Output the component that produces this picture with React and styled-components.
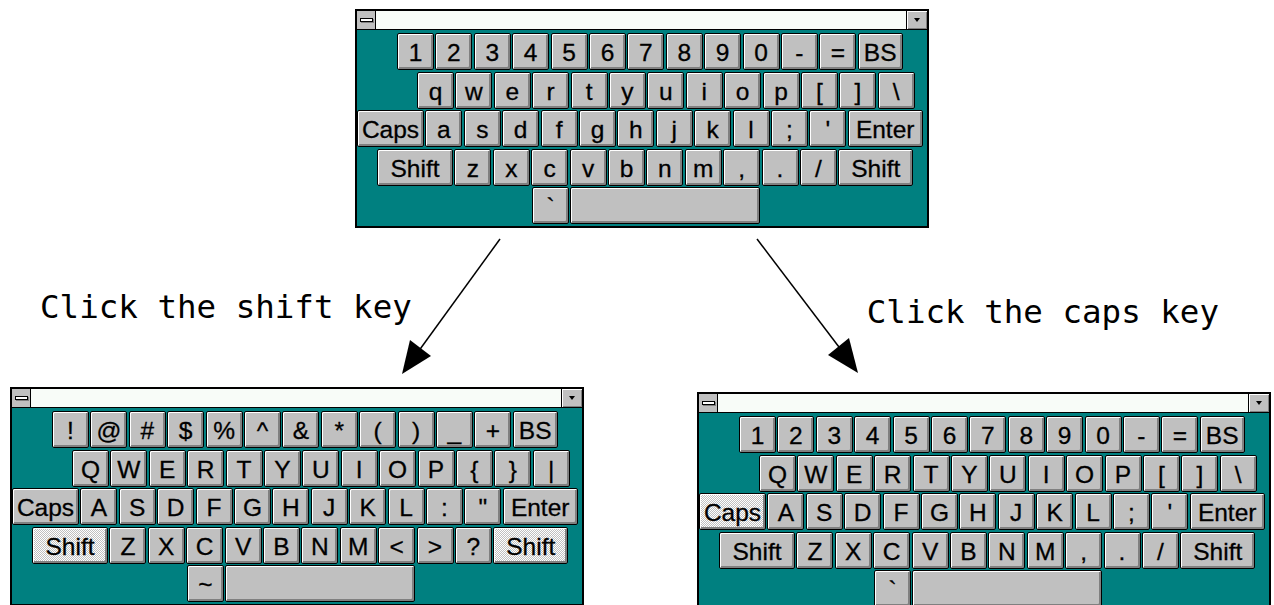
import React from "react";
import styled, { createGlobalStyle } from "styled-components";

const GlobalStyle = createGlobalStyle`
  html, body { margin: 0; padding: 0; background: #ffffff; }
  #root { width: 1274px; height: 605px; }
`;

const Page = styled.div`
  position: relative;
  width: 1274px;
  height: 605px;
  overflow: hidden;
  background: #ffffff;
  display: flex;
  flex-direction: column;
`;

const TopRow = styled.div`
  display: flex;
  padding: 9px 0 0 355px;
  flex: none;
`;

const MiddleRow = styled.div`
  display: flex;
  align-items: flex-start;
  height: 159px;
  flex: none;
`;

const Caption = styled.div`
  margin-left: ${(p) => p.$x}px;
  margin-top: ${(p) => p.$y}px;
  font-family: "DejaVu Sans Mono", "Liberation Mono", monospace;
  font-size: 32.5px;
  line-height: 36px;
  color: #000;
  white-space: nowrap;
  flex: none;
`;

const BottomRow = styled.div`
  display: flex;
  align-items: flex-start;
  padding-left: 10px;
  gap: 113px;
  flex: none;
`;

const WindowSlot = styled.div`
  margin-top: ${(p) => p.$y || 0}px;
  flex: none;
`;

const Window = styled.div`
  box-sizing: border-box;
  width: 574px;
  height: 219px;
  border: 2px solid #000;
  background: #008080;
  display: flex;
  flex-direction: column;
`;

const TitleBar = styled.div`
  box-sizing: border-box;
  height: 19px;
  display: flex;
  border-bottom: 1px solid #000;
  flex: none;
`;

const SysBox = styled.div`
  box-sizing: border-box;
  width: 19px;
  background: #c0c0c0;
  border-right: 1px solid #000;
  display: flex;
  align-items: center;
  justify-content: center;
`;

const SysBar = styled.div`
  box-sizing: border-box;
  width: 13px;
  height: 4px;
  background: #fff;
  border: 1px solid #000;
  box-shadow: 1px 1px 0 #808080;
`;

const Field = styled.div`
  flex: 1;
  background: #f8fcf8;
`;

const DropButton = styled.div`
  box-sizing: border-box;
  width: 21px;
  background: #c0c0c0;
  border-left: 1px solid #000;
  box-shadow: inset 1px 1px 0 #fff, inset -1px -1px 0 #808080;
  display: flex;
  align-items: center;
  justify-content: center;
`;

const DropArrow = styled.div`
  width: 0;
  height: 0;
  border-left: 3px solid transparent;
  border-right: 3px solid transparent;
  border-top: 4px solid #000;
`;

const KeyArea = styled.div`
  display: flex;
  flex-direction: column;
  gap: 1.5px;
  padding-top: 3px;
`;

const Row = styled.div`
  display: flex;
  gap: 1.4px;
  padding-left: ${(p) => p.$indent}px;
`;

const dither = `
  background-color: #ffffff;
  background-image: repeating-conic-gradient(#c0c0c0 0 25%, #ffffff 0 50%);
  background-size: 2px 2px;
`;

const Key = styled.div`
  box-sizing: border-box;
  flex: none;
  width: ${(p) => p.$w}px;
  height: 37px;
  border: 1px solid #000;
  border-radius: 2px;
  ${(p) => (p.$down ? dither : "background: #c0c0c0;")}
  box-shadow: inset 1px 1px 0 #ffffff, inset -1px -1px 0 #808080,
    inset -2px -2px 0 #808080;
  display: flex;
  align-items: center;
  justify-content: center;
  padding-top: 3px;
  font-family: "Liberation Sans", Arial, sans-serif;
  font-size: 24.5px;
  -webkit-text-stroke: 0.3px #000;
  color: #000;
  white-space: nowrap;
  overflow: hidden;
`;

const Arrows = styled.svg`
  position: absolute;
  left: 0;
  top: 0;
  pointer-events: none;
`;

const k = (l, w = 37) => ({ l, w });

const layouts = {
  normal: [
    { indent: 40, keys: [..."1234567890-=".split("").map((c) => k(c)), k("BS", 45)] },
    { indent: 60, keys: "qwertyuiop[]\\".split("").map((c) => k(c)) },
    { indent: 0, keys: [k("Caps", 67), ..."asdfghjkl;'".split("").map((c) => k(c)), k("Enter", 75)] },
    { indent: 20, keys: [k("Shift", 76), ..."zxcvbnm,./".split("").map((c) => k(c)), k("Shift", 75)] },
    { indent: 175, keys: [k("`"), k("", 190)] },
  ],
  shift: [
    { indent: 40, keys: [..."!@#$%^&*()_+".split("").map((c) => k(c)), k("BS", 45)] },
    { indent: 60, keys: "QWERTYUIOP{}|".split("").map((c) => k(c)) },
    { indent: 0, keys: [k("Caps", 67), ...'ASDFGHJKL:"'.split("").map((c) => k(c)), k("Enter", 75)] },
    { indent: 20, keys: [k("Shift", 76), ..."ZXCVBNM<>?".split("").map((c) => k(c)), k("Shift", 75)] },
    { indent: 175, keys: [k("~"), k("", 190)] },
  ],
  caps: [
    { indent: 40, keys: [..."1234567890-=".split("").map((c) => k(c)), k("BS", 45)] },
    { indent: 60, keys: "QWERTYUIOP[]\\".split("").map((c) => k(c)) },
    { indent: 0, keys: [k("Caps", 67), ..."ASDFGHJKL;'".split("").map((c) => k(c)), k("Enter", 75)] },
    { indent: 20, keys: [k("Shift", 76), ..."ZXCVBNM,./".split("").map((c) => k(c)), k("Shift", 75)] },
    { indent: 175, keys: [k("`"), k("", 190)] },
  ],
};

function Keyboard({ mode, down }) {
  const rows = layouts[mode];
  return (
    <Window>
      <TitleBar>
        <SysBox>
          <SysBar />
        </SysBox>
        <Field />
        <DropButton>
          <DropArrow />
        </DropButton>
      </TitleBar>
      <KeyArea>
        {rows.map((row, ri) => (
          <Row key={ri} $indent={row.indent}>
            {row.keys.map((key, ki) => (
              <Key key={ki} $w={key.w} $down={down === key.l}>
                {key.l}
              </Key>
            ))}
          </Row>
        ))}
      </KeyArea>
    </Window>
  );
}

export default function App() {
  return (
    <>
      <GlobalStyle />
      <Page>
        <TopRow>
          <Keyboard mode="normal" />
        </TopRow>
        <MiddleRow>
          <Caption $x={40} $y={61}>Click the shift key</Caption>
          <Caption $x={455} $y={66}>Click the caps key</Caption>
        </MiddleRow>
        <BottomRow>
          <WindowSlot>
            <Keyboard mode="shift" down="Shift" />
          </WindowSlot>
          <WindowSlot $y={5}>
            <Keyboard mode="caps" down="Caps" />
          </WindowSlot>
        </BottomRow>
        <Arrows width="1274" height="605" viewBox="0 0 1274 605">
          <line x1="500" y1="239" x2="418" y2="352" stroke="#000" strokeWidth="1.5" />
          <polygon points="402,374 431,356 410,340" fill="#000" />
          <line x1="757" y1="239" x2="842" y2="351" stroke="#000" strokeWidth="1.5" />
          <polygon points="858,373 849,338 828,355" fill="#000" />
        </Arrows>
      </Page>
    </>
  );
}
